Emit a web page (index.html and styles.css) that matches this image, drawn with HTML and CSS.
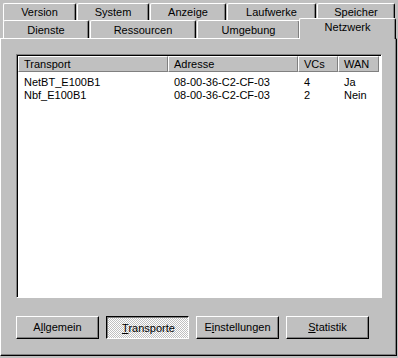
FILE: index.html
```html
<!DOCTYPE html>
<html lang="de">
<head>
<meta charset="utf-8">
<title>Windows NT-Diagnose</title>
<link rel="stylesheet" href="styles.css">
</head>
<body>
<div class="dialog">
  <div class="tabrow row-back">
    <div class="tab w-version">Version</div>
    <div class="tab w-system">System</div>
    <div class="tab w-anzeige">Anzeige</div>
    <div class="tab w-laufwerke">Laufwerke</div>
    <div class="tab w-speicher">Speicher</div>
  </div>
  <div class="tabrow row-front">
    <div class="tab w-dienste">Dienste</div>
    <div class="tab w-ressourcen">Ressourcen</div>
    <div class="tab w-umgebung">Umgebung</div>
    <div class="tab tab-active w-netzwerk">Netzwerk</div>
  </div>
  <div class="panel">
    <div class="listview">
      <div class="lv-header">
        <div class="hcell c-transport">Transport</div>
        <div class="hcell c-adresse">Adresse</div>
        <div class="hcell c-vcs">VCs</div>
        <div class="hcell c-wan">WAN</div>
      </div>
      <div class="lv-body">
        <div class="lv-row">
          <div class="cell c-transport">NetBT_E100B1</div>
          <div class="cell c-adresse">08-00-36-C2-CF-03</div>
          <div class="cell c-vcs">4</div>
          <div class="cell c-wan">Ja</div>
        </div>
        <div class="lv-row">
          <div class="cell c-transport">Nbf_E100B1</div>
          <div class="cell c-adresse">08-00-36-C2-CF-03</div>
          <div class="cell c-vcs">2</div>
          <div class="cell c-wan">Nein</div>
        </div>
      </div>
    </div>
    <div class="buttons">
      <button class="btn">A<u>l</u>lgemein</button>
      <button class="btn btn-pressed"><u>T</u>ransporte</button>
      <button class="btn">E<u>i</u>nstellungen</button>
      <button class="btn"><u>S</u>tatistik</button>
    </div>
  </div>
</div>
</body>
</html>
```
FILE: styles.css
```css
* { box-sizing: border-box; }
html, body {
  margin: 0;
  padding: 0;
  background: #c0c0c0;
}
body {
  width: 398px;
  height: 358px;
  overflow: hidden;
  font-family: "Liberation Sans", Arial, sans-serif;
  font-size: 11px;
  color: #000;
}
.dialog {
  padding-top: 3px;
  width: 398px;
  height: 358px;
  display: flex;
  flex-direction: column;
}
.tabrow {
  display: flex;
  align-items: flex-start;
  gap: 1px;
  padding-left: 3px;
  position: relative;
  z-index: 1;
}
.row-back { height: 17px; }
.row-front { height: 18px; }
.tab {
  height: 18px;
  border-top: 1px solid #fff;
  border-left: 1px solid #fff;
  border-right: 1px solid #000;
  border-top-left-radius: 2px;
  border-top-right-radius: 2px;
  box-shadow: inset -1px 0 0 #808080;
  background: #c0c0c0;
  text-align: center;
  line-height: 13px;
  padding-top: 2px;
  white-space: nowrap;
}
.row-front .tab { padding-top: 3px; }
.row-front .tab.tab-active {
  height: 21px;
  margin: -2px -2px -1px -2px;
  padding-top: 2px;
  position: relative;
  z-index: 2;
}
.w-version { width: 73px; }
.w-system { width: 72px; }
.w-anzeige { width: 76px; }
.w-laufwerke { width: 89px; }
.w-speicher { width: 78px; }
.w-dienste { width: 86px; }
.w-ressourcen { width: 106px; }
.w-umgebung { width: 103px; }
.w-netzwerk { width: 97px; }

.panel {
  width: 397px;
  height: 318px;
  border-top: 1px solid #fff;
  border-left: 1px solid #fff;
  border-right: 1px solid #000;
  border-bottom: 1px solid #000;
  box-shadow: inset -1px -1px 0 #808080;
  padding: 15px 0 0 15px;
  display: flex;
  flex-direction: column;
}
.listview {
  width: 366px;
  height: 244px;
  border: 1px solid;
  border-color: #808080 #fff #fff #808080;
  box-shadow: inset 1px 1px 0 #000;
  background: #fff;
  padding: 1px 0 0 1px;
}
.lv-header {
  display: flex;
  height: 16px;
}
.hcell {
  height: 16px;
  background: #c0c0c0;
  border-top: 1px solid #fff;
  border-left: 1px solid #fff;
  border-right: 1px solid #808080;
  border-bottom: 1px solid #808080;
  line-height: 13px;
  padding-top: 1px;
  padding-left: 5px;
  white-space: nowrap;
}
.c-transport { width: 150px; }
.c-adresse { width: 130px; }
.c-vcs { width: 40px; }
.c-wan { width: 41px; }
.lv-body { padding-top: 4px; }
.lv-row {
  display: flex;
  height: 13px;
  line-height: 13px;
}
.cell {
  padding-left: 6px;
  white-space: nowrap;
}
.buttons {
  display: flex;
  gap: 7px;
  margin-top: 18px;
}
.btn {
  width: 83px;
  height: 23px;
  margin: 0;
  padding: 0;
  font-family: "Liberation Sans", Arial, sans-serif;
  font-size: 11px;
  color: #000;
  background: #c0c0c0;
  border: 1px solid;
  border-color: #fff #000 #000 #fff;
  box-shadow: inset -1px -1px 0 #808080;
  border-radius: 0;
  line-height: 13px;
}
.btn u { text-decoration: underline; text-underline-offset: 1px; }
.btn-pressed {
  border-color: #000 #fff #fff #000;
  box-shadow: inset 1px 1px 0 #808080;
  background: repeating-conic-gradient(#fff 0 25%, #c0c0c0 0 50%) 0 0 / 2px 2px;
  padding-top: 2px;
  padding-left: 2px;
}
```
